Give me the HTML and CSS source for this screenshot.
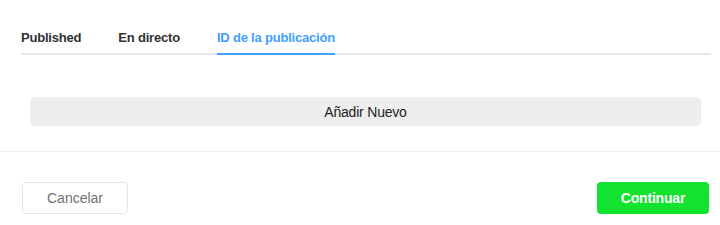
FILE: index.html
```html
<!DOCTYPE html>
<html>
<head>
  <title>Publicación</title>
  <link rel="stylesheet" href="styles.css">
</head>
<body>
  <div class="dialog">
    <div class="tabs">
      <div class="tab">Published</div>
      <div class="tab">En directo</div>
      <div class="tab is-active">ID de la publicación</div>
    </div>

    <div class="dialog-body">
      <button class="add-button">Añadir Nuevo</button>
    </div>

    <div class="dialog-footer">
      <button class="btn btn-default">Cancelar</button>
      <button class="btn btn-success">Continuar</button>
    </div>
  </div>
</body>
</html>
```

FILE: styles.css
```css
body {
  margin: 0;
  background-color: #fff;
  font-family: "Liberation Sans", Arial, sans-serif;
}

.dialog {
  width: 720px;
}

.tabs {
  display: flex;
  gap: 37px;
  margin: 28px 9px 0 21px;
  border-bottom: 2px solid #e4e7ed;
}

.tab {
  font-size: 13px;
  font-weight: bold;
  letter-spacing: -0.2px;
  line-height: 20px;
  color: #303133;
  padding-bottom: 5px;
  margin-bottom: -2px;
  border-bottom: 2px solid transparent;
}

.tab.is-active {
  color: #409eff;
  border-bottom-color: #409eff;
}

.dialog-body {
  padding: 42px 19px 25px 30px;
  border-bottom: 1px solid #ededed;
}

.add-button {
  display: block;
  width: 100%;
  height: 29px;
  border: none;
  border-radius: 5px;
  background-color: #eeeeee;
  font-family: inherit;
  font-size: 14px;
  letter-spacing: -0.2px;
  color: #222;
}

.dialog-footer {
  display: flex;
  justify-content: space-between;
  padding: 30px 11px 0 22px;
}

.btn {
  height: 32px;
  border-radius: 4px;
  font-family: inherit;
  font-size: 14px;
}

.btn-default {
  width: 106px;
  border: 1px solid #e2e6ec;
  background-color: #fff;
  color: #707070;
}

.btn-success {
  width: 112px;
  border: none;
  background-color: #11e32f;
  color: #fff;
  font-weight: bold;
  letter-spacing: -0.2px;
}
```
